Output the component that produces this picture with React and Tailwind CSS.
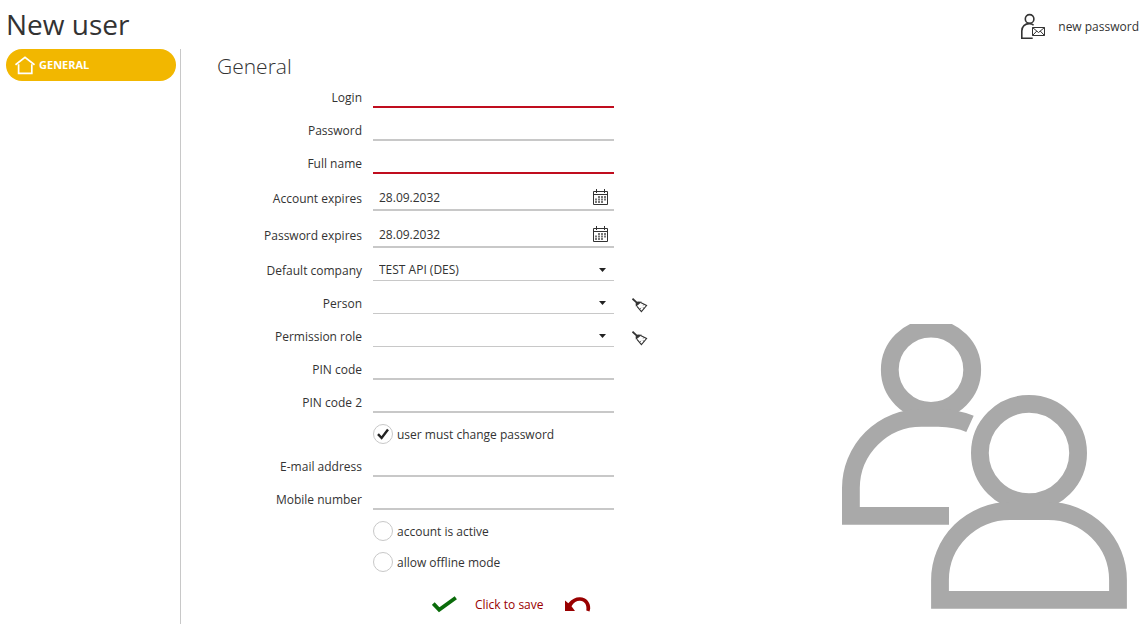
import { useState } from "react";

const lineInput =
  "block w-full min-w-0 bg-transparent px-1 text-[12px] leading-5 text-[#333] outline-none";

function HouseIcon() {
  return (
    <svg width="20" height="19" viewBox="0 0 20 19" fill="none" stroke="#fff" strokeWidth="1.7" aria-hidden="true">
      <path d="M.5 8.8 10 1.4l9.5 7.4" />
      <path d="M3.6 8.2v9.2h13.2V8.2" />
    </svg>
  );
}

function UserMailIcon() {
  return (
    <svg width="26" height="27" viewBox="0 0 26 27" fill="none" stroke="#333" aria-hidden="true">
      <circle cx="9.6" cy="5.9" r="4.3" strokeWidth="1.6" />
      <path d="M13.6 12.2C12.4 11 11 10.6 9.2 10.6 5 10.6 1.8 13.6 1.8 18v7.3h10.9" strokeWidth="1.6" />
      <path d="M12.5 14.5h12v8h-12zM12.5 14.5l6 5 6-5M12.5 22.5l4.3-4.5M24.5 22.5l-4.3-4.5" strokeWidth="1" />
    </svg>
  );
}

function CalendarIcon() {
  return (
    <svg width="15" height="16" viewBox="0 0 15 16" fill="none" aria-hidden="true">
      <path d="M.5 2.5h14v13H.5zM.5 5.5h14M3.5 0v4M11.5 0v4" stroke="#333" />
      <path d="M5 8h8M2 10.5h11M2 13h8" stroke="#777" strokeWidth="1.8" strokeDasharray="2 1" />
    </svg>
  );
}

function BroomIcon() {
  return (
    <svg width="16" height="15" viewBox="0 0 16 15" fill="none" stroke="#333" aria-hidden="true">
      <path d="M.5.7 5 4.8" strokeWidth="1.8" />
      <path d="M4.400 7.600 4.200 5.600 5.800 4 8.400 4.200z" fill="#333" strokeWidth="1.200" />
      <path d="M8.600 4.400 14.600 7.500 9.400 13.700 5 8.300" strokeWidth="1.1" />
      <path d="m7.600 11.500 1.400-1.700M12.200 10.400l-1.400-.8M12.200 6.300l-1 1.200" strokeWidth=".7" />
    </svg>
  );
}

function PeopleDrawing() {
  return (
    <svg className="h-auto w-full" viewBox="0 0 285 285" fill="none" stroke="#a9a9a9" strokeWidth="17.8" aria-hidden="true">
      <circle cx="89" cy="45.7" r="41.2" />
      <path d="M107 191.8H8.9V164A70.5 70.5 0 0 1 79.4 93.8H96C108 94 119 95.8 128 99.9" />
      <circle cx="187" cy="129" r="49.1" />
      <path d="M98 275.9V256A70 69 0 0 1 168 187H206A70 69 0 0 1 276 256V275.9Z" />
    </svg>
  );
}

function Label({ id, children, raised }) {
  return (
    <label htmlFor={id} className={`w-[145px] shrink-0 text-right ${raised ? "pb-[2px]" : ""}`}>
      {children}
    </label>
  );
}

function TextRow({ id, label, type = "text", required }) {
  return (
    <div className="flex h-[33px] items-end gap-[11px]">
      <Label id={id}>{label}</Label>
      <div className={`w-[241px] border-b-2 ${required ? "border-[#c00d1e]" : "border-[#c8c8c8]"}`}>
        <input id={id} type={type} required={required} className={lineInput} />
      </div>
    </div>
  );
}

function DateRow({ id, label }) {
  return (
    <div className="flex h-[37px] items-end gap-[11px]">
      <Label id={id} raised>{label}</Label>
      <div className="flex w-[241px] items-end border-b-2 border-[#c8c8c8] pr-[6px] pb-px pl-[2px]">
        <input id={id} type="text" defaultValue="28.09.2032" className={lineInput} />
        <button type="button" aria-label={`Pick date: ${label}`} className="pb-[3px]">
          <CalendarIcon />
        </button>
      </div>
    </div>
  );
}

function SelectRow({ id, label, options, clearable }) {
  const [value, setValue] = useState(options[0]);
  return (
    <div className="flex h-[33px] items-end gap-[11px]">
      <Label id={id}>{label}</Label>
      <div className="grid w-[241px] items-center border-b border-[#c8c8c8] pl-[2px]">
        <select
          id={id}
          value={value}
          onChange={(e) => setValue(e.target.value)}
          className={`${lineInput} col-start-1 row-start-1 appearance-none`}
        >
          {options.map((o) => (
            <option key={o} value={o}>{o}</option>
          ))}
        </select>
        <svg className="pointer-events-none col-start-1 row-start-1 mr-2 justify-self-end" width="7" height="4" viewBox="0 0 7 4" aria-hidden="true">
          <path d="M0 0h7L3.5 4z" fill="#222" />
        </svg>
      </div>
      {clearable && (
        <button type="button" aria-label={`Clear ${label}`} onClick={() => setValue("")} className="ml-[7px] pb-px">
          <BroomIcon />
        </button>
      )}
    </div>
  );
}

function CheckRow({ label, defaultChecked }) {
  return (
    <div className="flex h-[31px] items-end pl-[156px]">
      <label className="flex items-center gap-1">
        <span className="grid place-items-center">
          <input
            type="checkbox"
            defaultChecked={defaultChecked}
            className="peer col-start-1 row-start-1 size-5 appearance-none rounded-full border border-[#c8c8c8] bg-white"
          />
          <svg className="pointer-events-none invisible col-start-1 row-start-1 peer-checked:visible" width="12" height="12" viewBox="0 0 12 12" fill="none" aria-hidden="true">
            <path d="M1 6.2 4.6 10 11 1.5" stroke="#222" strokeWidth="2.4" />
          </svg>
        </span>
        <span className="h-5 leading-[22px]">{label}</span>
      </label>
    </div>
  );
}

export default function App() {
  return (
    <div className="flex min-h-screen flex-col bg-white pb-2 font-['Open_Sans','Noto_Sans',sans-serif] text-[12px] leading-5 text-[#333]">
      <header className="flex h-[49px] items-center justify-between pr-[6px] pl-[6px]">
        <h1 className="pb-[2px] text-[28px] leading-9">New user</h1>
        <button type="button" className="flex items-center gap-3 pt-1">
          <UserMailIcon />
          <span>new password</span>
        </button>
      </header>

      <div className="flex flex-1">
        <nav className="w-[181px] shrink-0 border-r border-[#c8c8c8] pr-1 pl-[6px]">
          <a href="#general" className="flex h-8 items-center gap-1 rounded-full bg-[#f2b700] pl-[9px] text-[11px] font-bold text-white">
            <HouseIcon />
            GENERAL
          </a>
        </nav>

        <main id="general" className="flex flex-1 justify-between pl-9">
          <form className="shrink-0" onSubmit={(e) => e.preventDefault()}>
            <h2 className="h-[26px] pt-1 text-[21px] leading-[26px] font-light">General</h2>
            <TextRow id="login" label="Login" required />
            <TextRow id="password" label="Password" type="password" />
            <TextRow id="full-name" label="Full name" required />
            <DateRow id="account-expires" label="Account expires" />
            <DateRow id="password-expires" label="Password expires" />
            <SelectRow id="company" label="Default company" options={["TEST API (DES)"]} />
            <SelectRow id="person" label="Person" options={[""]} clearable />
            <SelectRow id="role" label="Permission role" options={[""]} clearable />
            <TextRow id="pin" label="PIN code" />
            <TextRow id="pin2" label="PIN code 2" />
            <CheckRow label="user must change password" defaultChecked />
            <TextRow id="email" label="E-mail address" type="email" />
            <TextRow id="mobile" label="Mobile number" type="tel" />
            <CheckRow label="account is active" />
            <CheckRow label="allow offline mode" />
            <div className="mt-[22px] flex items-center gap-[21px] pl-[215px] text-[#900]">
              <button type="submit" className="flex items-center gap-[18px]">
                <svg width="25" height="17" viewBox="0 0 25 17" fill="none" aria-hidden="true">
                  <path d="M1.3 7.5 7.2 13.8 23.8 1.7" stroke="#0a6b0a" strokeWidth="3.8" />
                </svg>
                <span className="h-5 leading-[22px]">Click to save</span>
              </button>
              <button type="reset" aria-label="Undo">
                <svg width="26" height="15" viewBox="0 0 26 15" aria-hidden="true">
                  <path d="M0 3.5 3.3 6.2C7 1.8 11.2 0 15 .2 21.5.4 25.5 5.5 25.2 11.5L24.5 14.5 21.3 13.5C22.3 8 19.5 4 15 3.8 11.8 3.7 8.7 5.4 6.5 9.2L10 14H0Z" fill="#900" />
                </svg>
              </button>
            </div>
          </form>
          <div className="mr-[18px] mb-[15px] w-[285px] self-end">
            <PeopleDrawing />
          </div>
        </main>
      </div>
    </div>
  );
}
